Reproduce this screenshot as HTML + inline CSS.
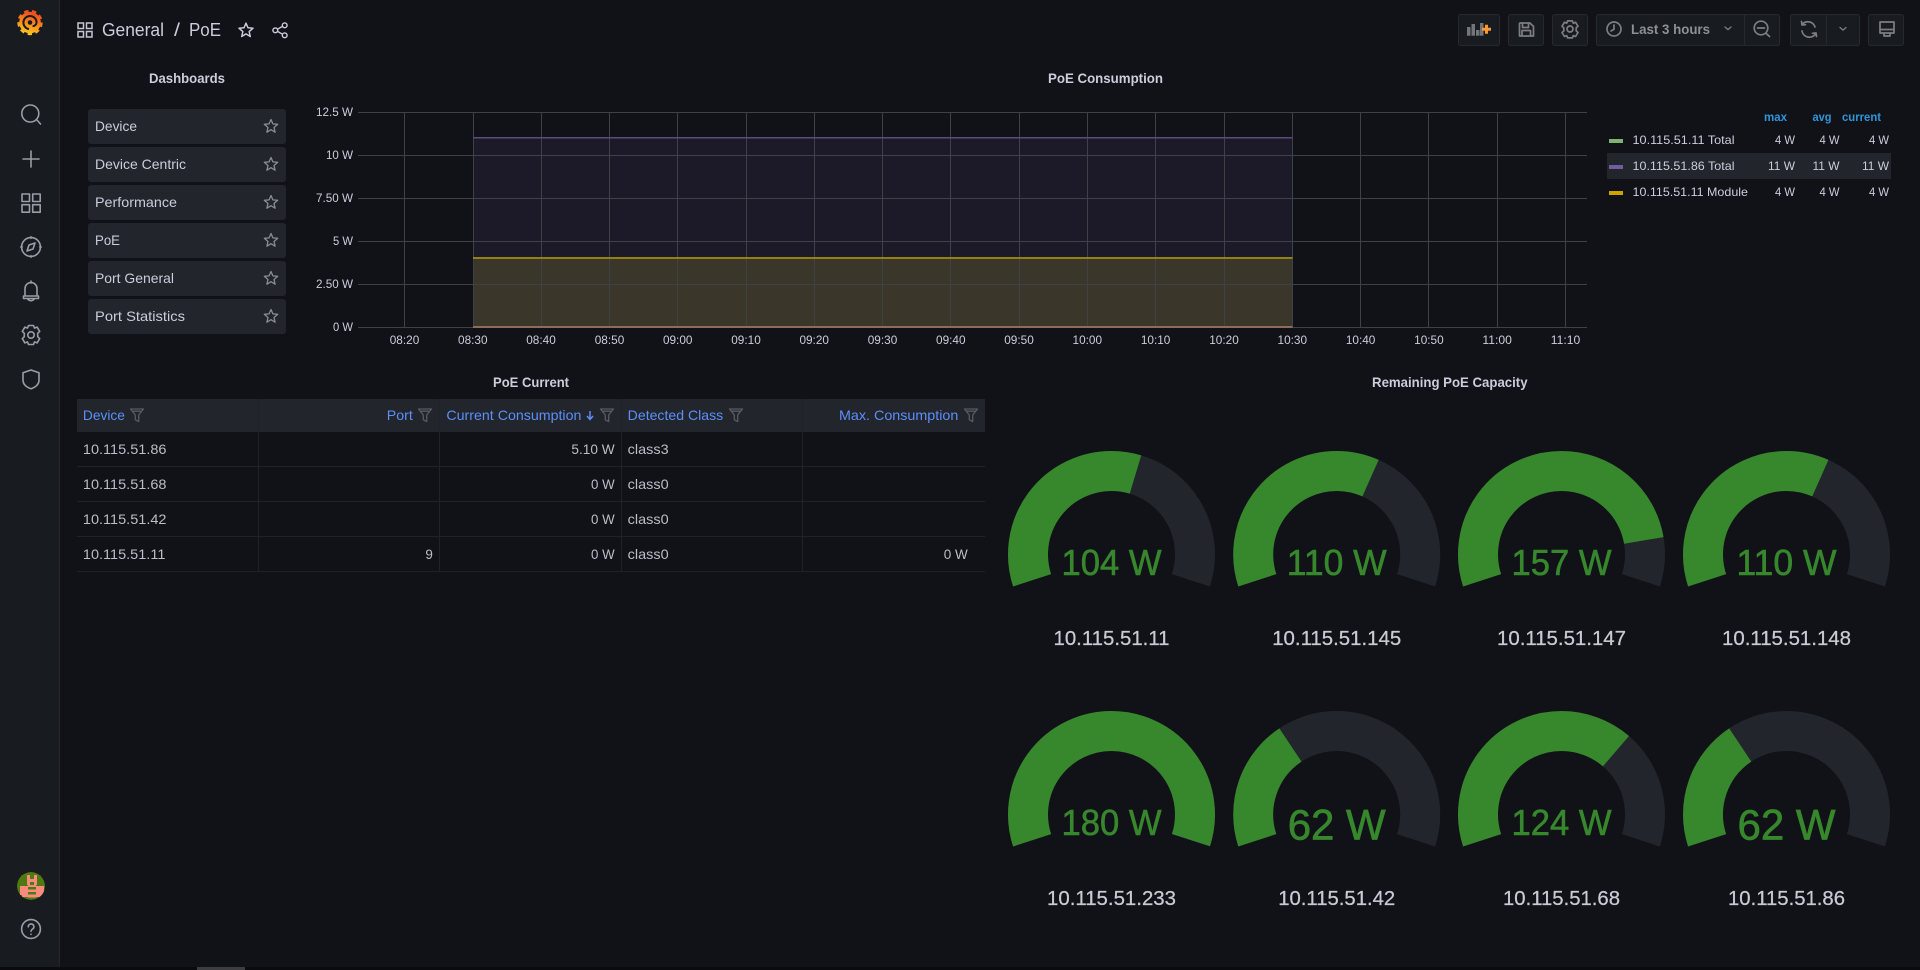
<!DOCTYPE html>
<html lang="en"><head><meta charset="utf-8"><title>PoE</title>
<style>
html,body{margin:0;padding:0;background:#111217;overflow:hidden}
svg{display:block}
text{font-family:"Liberation Sans",sans-serif;fill:#ccccdc}
.b{font-weight:700;font-size:14px}
.n{font-size:14px}
.s{font-size:12px}
.ax{font-size:12px;fill:#b9bac4}
.td{font-size:14px;fill:#bcbdc7}
.th{font-size:14px;fill:#5b8ff9}
.m{text-anchor:middle}
.e{text-anchor:end}
.ic{fill:none;stroke:#989da7;stroke-width:1.6;stroke-linecap:round;stroke-linejoin:round}
.tb{fill:none;stroke:#7d7e85;stroke-width:1.7;stroke-linecap:round;stroke-linejoin:round}
.btn{fill:#181b1f;stroke:#25282d}
.li{fill:#22252b}
.g{fill:none;stroke:#22252b;stroke-width:40}
.v{fill:none;stroke:#37872d;stroke-width:40}
.gv{font-size:36px;fill:#37872d;text-anchor:middle;stroke:#37872d;stroke-width:.6}
.gb{font-size:43px;fill:#37872d;text-anchor:middle;stroke:#37872d;stroke-width:.7}
.gl{font-size:20px;fill:#c9cad4;text-anchor:middle;stroke:#c9cad4;stroke-width:.25}
.gr line{stroke:#404146;stroke-width:1}
.col line{stroke:#202226;stroke-width:1}
</style></head><body>
<svg xmlns="http://www.w3.org/2000/svg" width="1920" height="970" viewBox="0 0 1920 970">
<defs>
<linearGradient id="lg" x1="0" y1="1" x2="0.3" y2="0"><stop offset="0" stop-color="#ffd21f"/><stop offset="0.55" stop-color="#fb8b1e"/><stop offset="1" stop-color="#f0501e"/></linearGradient>
<path id="star" d="M0-7 1.9-2.6 6.7-2.2 3 1 4.1 5.7 0 3.2-4.1 5.7-3 1-6.7-2.2-1.9-2.6Z" fill="none" stroke-linejoin="round"/>
<path id="fil" d="M0 0H13L8.2 6V12.5L4.8 10.8V6Z M1.5 2.2H11.5" fill="none" stroke="#595b62" stroke-width="1.3" stroke-linejoin="round"/>
<clipPath id="av"><circle cx="31" cy="886" r="14"/></clipPath>
</defs>

<rect width="1920" height="970" fill="#111217"/>
<!-- sidebar -->
<rect width="59" height="967" fill="#181b1f"/>
<rect x="59" width="1" height="967" fill="#23262b"/>
<!-- logo -->
<g transform="translate(30 22.5)">
<circle r="10.8" fill="url(#lg)"/>
<circle r="11.6" fill="none" stroke="url(#lg)" stroke-width="2.2" pathLength="90" stroke-dasharray="5.5 4.5"/>
<path d="M-1 6.6A6.6 6.6 0 1 1 6.6 0A4 4 0 0 1 2.6 3.6" fill="none" stroke="#181b1f" stroke-width="2"/>
<circle r="2.3" fill="#181b1f"/>
</g>
<!-- nav icons -->
<g class="ic">
<circle cx="30.3" cy="113.5" r="8.5"/><path d="M36.5 119.5 40.5 124"/>
<path d="M31 151V167M23 159H39"/>
<path d="M22 194h7.5v7.5H22zM32.7 194h7.5v7.5h-7.5zM22 204.7h7.5v7.5H22zM32.7 204.7h7.5v7.5h-7.5z"/>
<circle cx="31" cy="247" r="9.4"/><path d="M35 243 33 249 27 251 29 245Z"/><path d="M31 236.5v2M31 255.5v2M20.5 247h2M39.5 247h2" stroke-width="1.2"/>
<path d="M31 281v2M25 295v-6.5a6 6 0 0 1 12 0V295M23.5 296h15v2.5h-15zM28 299.5q3 2.5 6 0"/>
<circle cx="31" cy="335" r="3.2"/>
<path d="M28.5 325.5h5l1 2.6 2.6-1 2.6 4.3-2 1.9v3.4l2 1.9-2.6 4.3-2.6-1-1 2.6h-5l-1-2.6-2.6 1-2.6-4.3 2-1.9v-3.4l-2-1.9 2.6-4.3 2.6 1Z"/>
<path d="M31 370 39 372.8V380C39 384.8 35.4 387 31 388.8 26.6 387 23 384.8 23 380V372.8Z"/>
<circle cx="31" cy="929" r="9.4"/><path d="M28.3 926.8a2.8 2.8 0 1 1 4.3 2.3c-1 .7-1.6 1.1-1.6 2.2M31 934.2v.2"/>
</g>
<!-- avatar -->
<g clip-path="url(#av)">
<circle cx="31" cy="886" r="14" fill="#4f7a12"/>
<g fill="#f98a7e">
<rect x="27" y="875" width="3" height="10"/><rect x="34" y="875" width="3" height="10"/><rect x="27" y="879" width="10" height="3"/>
<rect x="20" y="886" width="8" height="9"/><rect x="36" y="886" width="8" height="9"/><rect x="22" y="895" width="6" height="2"/><rect x="36" y="895" width="6" height="2"/>
<rect x="28" y="885" width="8" height="2"/><rect x="28" y="889.5" width="8" height="2.5"/><rect x="28" y="894.5" width="8" height="3"/>
<rect x="20" y="874" width="2" height="2"/><rect x="40" y="874" width="2" height="2"/>
</g></g>
<!-- bottom strip -->
<rect y="967" width="1920" height="3" fill="#0a0b0d"/>
<rect x="197" y="967" width="48" height="3" fill="#3d3d3f"/>

<!-- breadcrumb -->
<path d="M78 23h5.5v5.5H78zM86.5 23H92v5.5h-5.5zM78 31.5h5.5V37H78zM86.5 31.5H92V37h-5.5z" fill="none" stroke="#c4c5cf" stroke-width="1.5"/>
<text x="102" y="36" font-size="18" textLength="62" lengthAdjust="spacingAndGlyphs">General</text>
<text x="174" y="36" font-size="18" textLength="6" lengthAdjust="spacingAndGlyphs">/</text>
<text x="189" y="36" font-size="18" textLength="32" lengthAdjust="spacingAndGlyphs">PoE</text>
<use href="#star" transform="translate(246 30.5) scale(1.05)" stroke="#ccccdc" stroke-width="1.4"/>
<g fill="none" stroke="#ccccdc" stroke-width="1.4"><circle cx="275.3" cy="30.3" r="2.4"/><circle cx="284.7" cy="25.3" r="2.4"/><circle cx="284.7" cy="35.3" r="2.4"/><path d="M277.5 29.2 282.5 26.4M277.5 31.4 282.5 34.2"/></g>

<!-- toolbar -->
<rect class="btn" x="1458.5" y="14.5" width="41" height="31" rx="2"/>
<rect class="btn" x="1508.5" y="14.5" width="35" height="31" rx="2"/>
<rect class="btn" x="1552.5" y="14.5" width="35" height="31" rx="2"/>
<rect class="btn" x="1596.5" y="14.5" width="183" height="31" rx="2"/>
<path d="M1744.5 14.5V45.5" stroke="#25282d"/>
<rect class="btn" x="1790.5" y="14.5" width="69" height="31" rx="2"/>
<path d="M1826.5 14.5V45.5" stroke="#25282d"/>
<rect class="btn" x="1868.5" y="14.5" width="35" height="31" rx="2"/>
<g fill="#74757b"><rect x="1467" y="27" width="3.5" height="8.7"/><rect x="1471.5" y="24" width="3.5" height="11.7"/><rect x="1476" y="30" width="3.5" height="5.7"/><rect x="1480" y="23" width="3.5" height="12.7"/></g>
<path d="M1482 29.2h9M1486.5 24.7v9" stroke="#ff9830" stroke-width="3" fill="none"/>
<g class="tb">
<path d="M1520 23h10l3.5 3.5V36h-14V23.5ZM1522.5 23v4.5h6V23M1522 36v-5.5h8.5V36"/>
<circle cx="1570" cy="29" r="3"/>
<path d="M1567.6 21.5h4.8l.9 2.3 2.3-.9 2.4 4-1.8 1.6v3l1.8 1.6-2.4 4-2.3-.9-.9 2.3h-4.8l-.9-2.3-2.3.9-2.4-4 1.8-1.6v-3l-1.8-1.6 2.4-4 2.3.9Z" transform="translate(0 -.6)"/>
<circle cx="1614" cy="29" r="7"/><path d="M1614 25v4.3l-3 1.7"/>
<path d="M1725 27l3 2.6 3-2.6" stroke-width="1.3"/>
<circle cx="1761" cy="28" r="6.8"/><path d="M1766 33.2 1769.5 36.5M1757.5 28h7"/>
<path d="M1802.5 24A7.5 7.5 0 0 1 1815 27M1815.5 34A7.5 7.5 0 0 1 1802 31M1801.5 21.5 1802 25 1805.5 24.7M1816.5 36.5 1816 33 1812.5 33.3"/>
<path d="M1840 27.5l3 2.6 3-2.6" stroke-width="1.3"/>
<path d="M1880 22h14v11h-14zM1880 29.5h14M1884 33v3h6v-3"/>
</g>
<text x="1631" y="34" class="n" font-weight="700" style="fill:#8e8f97" textLength="79" lengthAdjust="spacingAndGlyphs">Last 3 hours</text>

<!-- Dashboards panel -->
<text x="187" y="83" class="b m" textLength="76" lengthAdjust="spacingAndGlyphs">Dashboards</text>
<rect class="li" x="88" y="109" width="198" height="35" rx="3"/>
<rect class="li" x="88" y="147" width="198" height="35" rx="3"/>
<rect class="li" x="88" y="185" width="198" height="35" rx="3"/>
<rect class="li" x="88" y="223" width="198" height="35" rx="3"/>
<rect class="li" x="88" y="261" width="198" height="35" rx="3"/>
<rect class="li" x="88" y="299" width="198" height="35" rx="3"/>
<text x="95" y="131" class="n" textLength="42" lengthAdjust="spacingAndGlyphs">Device</text>
<text x="95" y="169" class="n" textLength="91" lengthAdjust="spacingAndGlyphs">Device Centric</text>
<text x="95" y="207" class="n" textLength="82" lengthAdjust="spacingAndGlyphs">Performance</text>
<text x="95" y="245" class="n" textLength="25" lengthAdjust="spacingAndGlyphs">PoE</text>
<text x="95" y="283" class="n" textLength="79" lengthAdjust="spacingAndGlyphs">Port General</text>
<text x="95" y="321" class="n" textLength="90" lengthAdjust="spacingAndGlyphs">Port Statistics</text>
<g stroke="#8a8c94" stroke-width="1.3">
<use href="#star" x="271" y="126.5"/><use href="#star" x="271" y="164.5"/><use href="#star" x="271" y="202.5"/><use href="#star" x="271" y="240.5"/><use href="#star" x="271" y="278.5"/><use href="#star" x="271" y="316.5"/>
</g>

<!-- Graph -->
<text x="1105.5" y="83" class="b m" textLength="115" lengthAdjust="spacingAndGlyphs">PoE Consumption</text>
<rect x="473" y="138" width="819.5" height="120" fill="#1c1a29"/>
<rect x="473" y="258" width="819.5" height="69.5" fill="#3a372a"/>
<g class="gr">
<line x1="358" x2="1587" y1="112.5" y2="112.5"/><line x1="358" x2="1587" y1="155.5" y2="155.5"/><line x1="358" x2="1587" y1="198.5" y2="198.5"/><line x1="358" x2="1587" y1="241.5" y2="241.5"/><line x1="358" x2="1587" y1="284.5" y2="284.5"/><line x1="358" x2="1587" y1="327.5" y2="327.5"/>
<line x1="404.5" x2="404.5" y1="112" y2="328"/><line x1="473.5" x2="473.5" y1="112" y2="328"/><line x1="541.5" x2="541.5" y1="112" y2="328"/><line x1="609.5" x2="609.5" y1="112" y2="328"/><line x1="677.5" x2="677.5" y1="112" y2="328"/><line x1="746.5" x2="746.5" y1="112" y2="328"/><line x1="814.5" x2="814.5" y1="112" y2="328"/><line x1="882.5" x2="882.5" y1="112" y2="328"/><line x1="950.5" x2="950.5" y1="112" y2="328"/><line x1="1019.5" x2="1019.5" y1="112" y2="328"/><line x1="1087.5" x2="1087.5" y1="112" y2="328"/><line x1="1155.5" x2="1155.5" y1="112" y2="328"/><line x1="1224.5" x2="1224.5" y1="112" y2="328"/><line x1="1292.5" x2="1292.5" y1="112" y2="328"/><line x1="1360.5" x2="1360.5" y1="112" y2="328"/><line x1="1428.5" x2="1428.5" y1="112" y2="328"/><line x1="1497.5" x2="1497.5" y1="112" y2="328"/><line x1="1565.5" x2="1565.5" y1="112" y2="328"/>
</g>
<rect x="473" y="137" width="819.5" height="1.5" fill="#5a4a80"/>
<rect x="473" y="257.2" width="819.5" height="1.5" fill="#b39f0c"/>
<rect x="473" y="326" width="819.5" height="2" fill="#8e6c58"/>
<g class="ax e">
<text x="353" y="116" textLength="37" lengthAdjust="spacingAndGlyphs">12.5 W</text>
<text x="353" y="159" textLength="27" lengthAdjust="spacingAndGlyphs">10 W</text>
<text x="353" y="202" textLength="37" lengthAdjust="spacingAndGlyphs">7.50 W</text>
<text x="353" y="245" textLength="20" lengthAdjust="spacingAndGlyphs">5 W</text>
<text x="353" y="288" textLength="37" lengthAdjust="spacingAndGlyphs">2.50 W</text>
<text x="353" y="331" textLength="20" lengthAdjust="spacingAndGlyphs">0 W</text>
</g>
<g class="ax m">
<text x="404.5" y="344" textLength="29.5" lengthAdjust="spacingAndGlyphs">08:20</text>
<text x="472.8" y="344" textLength="29.5" lengthAdjust="spacingAndGlyphs">08:30</text>
<text x="541" y="344" textLength="29.5" lengthAdjust="spacingAndGlyphs">08:40</text>
<text x="609.5" y="344" textLength="29.5" lengthAdjust="spacingAndGlyphs">08:50</text>
<text x="677.7" y="344" textLength="29.5" lengthAdjust="spacingAndGlyphs">09:00</text>
<text x="746" y="344" textLength="29.5" lengthAdjust="spacingAndGlyphs">09:10</text>
<text x="814.2" y="344" textLength="29.5" lengthAdjust="spacingAndGlyphs">09:20</text>
<text x="882.5" y="344" textLength="29.5" lengthAdjust="spacingAndGlyphs">09:30</text>
<text x="950.8" y="344" textLength="29.5" lengthAdjust="spacingAndGlyphs">09:40</text>
<text x="1019" y="344" textLength="29.5" lengthAdjust="spacingAndGlyphs">09:50</text>
<text x="1087.3" y="344" textLength="29.5" lengthAdjust="spacingAndGlyphs">10:00</text>
<text x="1155.6" y="344" textLength="29.5" lengthAdjust="spacingAndGlyphs">10:10</text>
<text x="1224" y="344" textLength="29.5" lengthAdjust="spacingAndGlyphs">10:20</text>
<text x="1292.3" y="344" textLength="29.5" lengthAdjust="spacingAndGlyphs">10:30</text>
<text x="1360.6" y="344" textLength="29.5" lengthAdjust="spacingAndGlyphs">10:40</text>
<text x="1428.9" y="344" textLength="29.5" lengthAdjust="spacingAndGlyphs">10:50</text>
<text x="1497.2" y="344" textLength="29.5" lengthAdjust="spacingAndGlyphs">11:00</text>
<text x="1565.5" y="344" textLength="29.5" lengthAdjust="spacingAndGlyphs">11:10</text>
</g>

<!-- legend -->
<g font-size="12" font-weight="700" style="fill:#33a2e5">
<text x="1764" y="121" style="fill:#2f95dc" textLength="23" lengthAdjust="spacingAndGlyphs">max</text>
<text x="1812.5" y="121" style="fill:#2f95dc" textLength="19" lengthAdjust="spacingAndGlyphs">avg</text>
<text x="1842" y="121" style="fill:#2f95dc" textLength="39" lengthAdjust="spacingAndGlyphs">current</text>
</g>
<rect x="1607" y="153" width="284" height="26" fill="#22252b"/>
<rect x="1609" y="139" width="14" height="4" fill="#7eb26d"/>
<rect x="1609" y="165" width="14" height="4" fill="#705da0"/>
<rect x="1609" y="191" width="14" height="4" fill="#cca300"/>
<g class="s">
<text x="1632.5" y="144" textLength="102" lengthAdjust="spacingAndGlyphs">10.115.51.11 Total</text>
<text x="1632.5" y="170" textLength="102" lengthAdjust="spacingAndGlyphs">10.115.51.86 Total</text>
<text x="1632.5" y="196" textLength="115.5" lengthAdjust="spacingAndGlyphs">10.115.51.11 Module</text>
</g>
<g class="s e">
<text x="1795" y="144" textLength="20" lengthAdjust="spacingAndGlyphs">4 W</text><text x="1839.5" y="144" textLength="20" lengthAdjust="spacingAndGlyphs">4 W</text><text x="1889" y="144" textLength="20" lengthAdjust="spacingAndGlyphs">4 W</text>
<text x="1795" y="170" textLength="27" lengthAdjust="spacingAndGlyphs">11 W</text><text x="1839.5" y="170" textLength="27" lengthAdjust="spacingAndGlyphs">11 W</text><text x="1889" y="170" textLength="27" lengthAdjust="spacingAndGlyphs">11 W</text>
<text x="1795" y="196" textLength="20" lengthAdjust="spacingAndGlyphs">4 W</text><text x="1839.5" y="196" textLength="20" lengthAdjust="spacingAndGlyphs">4 W</text><text x="1889" y="196" textLength="20" lengthAdjust="spacingAndGlyphs">4 W</text>
</g>

<!-- Table -->
<text x="531" y="387" class="b m" textLength="76" lengthAdjust="spacingAndGlyphs">PoE Current</text>
<rect x="77" y="399" width="908" height="33" fill="#22252b"/>
<g class="col">
<line x1="77" x2="985" y1="466.5" y2="466.5"/><line x1="77" x2="985" y1="501.5" y2="501.5"/><line x1="77" x2="985" y1="536.5" y2="536.5"/><line x1="77" x2="985" y1="571.5" y2="571.5"/>
<line x1="258.5" x2="258.5" y1="399" y2="571"/><line x1="439.5" x2="439.5" y1="399" y2="571"/><line x1="621.5" x2="621.5" y1="399" y2="571"/><line x1="802.5" x2="802.5" y1="399" y2="571"/>
</g>
<text x="82.9" y="420" class="th" textLength="42" lengthAdjust="spacingAndGlyphs">Device</text>
<text x="386.8" y="420" class="th" textLength="26" lengthAdjust="spacingAndGlyphs">Port</text>
<text x="446.4" y="420" class="th" textLength="135" lengthAdjust="spacingAndGlyphs">Current Consumption</text>
<text x="627.7" y="420" class="th" textLength="95.5" lengthAdjust="spacingAndGlyphs">Detected Class</text>
<text x="839" y="420" class="th" textLength="119.3" lengthAdjust="spacingAndGlyphs">Max. Consumption</text>
<path d="M590 411V419M587 416 590 419.5 593 416" fill="none" stroke="#5b8ff9" stroke-width="1.5"/>
<use href="#fil" x="130.5" y="409"/><use href="#fil" x="418.5" y="409"/><use href="#fil" x="600.5" y="409"/><use href="#fil" x="729.5" y="409"/><use href="#fil" x="964.5" y="409"/>
<text x="82.9" y="454" class="td" textLength="83.6" lengthAdjust="spacingAndGlyphs">10.115.51.86</text>
<text x="82.9" y="489" class="td" textLength="83.6" lengthAdjust="spacingAndGlyphs">10.115.51.68</text>
<text x="82.9" y="524" class="td" textLength="83.6" lengthAdjust="spacingAndGlyphs">10.115.51.42</text>
<text x="82.9" y="559" class="td" textLength="82.5" lengthAdjust="spacingAndGlyphs">10.115.51.11</text>
<text x="432.9" y="559" class="td e" textLength="7.5" lengthAdjust="spacingAndGlyphs">9</text>
<text x="614.6" y="454" class="td e" textLength="43.2" lengthAdjust="spacingAndGlyphs">5.10 W</text>
<text x="614.6" y="489" class="td e" textLength="23.6" lengthAdjust="spacingAndGlyphs">0 W</text>
<text x="614.6" y="524" class="td e" textLength="23.6" lengthAdjust="spacingAndGlyphs">0 W</text>
<text x="614.6" y="559" class="td e" textLength="23.6" lengthAdjust="spacingAndGlyphs">0 W</text>
<text x="627.7" y="454" class="td" textLength="41" lengthAdjust="spacingAndGlyphs">class3</text>
<text x="627.7" y="489" class="td" textLength="41" lengthAdjust="spacingAndGlyphs">class0</text>
<text x="627.7" y="524" class="td" textLength="41" lengthAdjust="spacingAndGlyphs">class0</text>
<text x="627.7" y="559" class="td" textLength="41" lengthAdjust="spacingAndGlyphs">class0</text>
<text x="967.7" y="559" class="td e" textLength="24" lengthAdjust="spacingAndGlyphs">0 W</text>

<!-- Gauges -->
<text x="1449.8" y="387" class="b m" textLength="155.5" lengthAdjust="spacingAndGlyphs">Remaining PoE Capacity</text>
<g transform="translate(1111.5 554.5)"><path class="g" d="M-79.41 25.8A83.5 83.5 0 1 1 79.41 25.8"/><path class="v" d="M-79.41 25.8A83.5 83.5 0 1 1 79.41 25.8" pathLength="216" stroke-dasharray="124.8 300"/><text y="20.5" class="gv" textLength="100" lengthAdjust="spacingAndGlyphs">104 W</text><text y="90.5" class="gl" textLength="116" lengthAdjust="spacingAndGlyphs">10.115.51.11</text></g>
<g transform="translate(1336.7 554.5)"><path class="g" d="M-79.41 25.8A83.5 83.5 0 1 1 79.41 25.8"/><path class="v" d="M-79.41 25.8A83.5 83.5 0 1 1 79.41 25.8" pathLength="216" stroke-dasharray="132 300"/><text y="20.5" class="gv" textLength="100" lengthAdjust="spacingAndGlyphs">110 W</text><text y="90.5" class="gl" textLength="129" lengthAdjust="spacingAndGlyphs">10.115.51.145</text></g>
<g transform="translate(1561.5 554.5)"><path class="g" d="M-79.41 25.8A83.5 83.5 0 1 1 79.41 25.8"/><path class="v" d="M-79.41 25.8A83.5 83.5 0 1 1 79.41 25.8" pathLength="216" stroke-dasharray="188.4 300"/><text y="20.5" class="gv" textLength="100" lengthAdjust="spacingAndGlyphs">157 W</text><text y="90.5" class="gl" textLength="129" lengthAdjust="spacingAndGlyphs">10.115.51.147</text></g>
<g transform="translate(1786.5 554.5)"><path class="g" d="M-79.41 25.8A83.5 83.5 0 1 1 79.41 25.8"/><path class="v" d="M-79.41 25.8A83.5 83.5 0 1 1 79.41 25.8" pathLength="216" stroke-dasharray="132 300"/><text y="20.5" class="gv" textLength="100" lengthAdjust="spacingAndGlyphs">110 W</text><text y="90.5" class="gl" textLength="129" lengthAdjust="spacingAndGlyphs">10.115.51.148</text></g>
<g transform="translate(1111.5 814.5)"><path class="g" d="M-79.41 25.8A83.5 83.5 0 1 1 79.41 25.8"/><path class="v" d="M-79.41 25.8A83.5 83.5 0 1 1 79.41 25.8" pathLength="216" stroke-dasharray="216 300"/><text y="20.5" class="gv" textLength="100" lengthAdjust="spacingAndGlyphs">180 W</text><text y="90.5" class="gl" textLength="129" lengthAdjust="spacingAndGlyphs">10.115.51.233</text></g>
<g transform="translate(1336.7 814.5)"><path class="g" d="M-79.41 25.8A83.5 83.5 0 1 1 79.41 25.8"/><path class="v" d="M-79.41 25.8A83.5 83.5 0 1 1 79.41 25.8" pathLength="216" stroke-dasharray="74.4 300"/><text y="24.8" class="gb" textLength="98" lengthAdjust="spacingAndGlyphs">62 W</text><text y="90.5" class="gl" textLength="117" lengthAdjust="spacingAndGlyphs">10.115.51.42</text></g>
<g transform="translate(1561.5 814.5)"><path class="g" d="M-79.41 25.8A83.5 83.5 0 1 1 79.41 25.8"/><path class="v" d="M-79.41 25.8A83.5 83.5 0 1 1 79.41 25.8" pathLength="216" stroke-dasharray="148.8 300"/><text y="20.5" class="gv" textLength="100" lengthAdjust="spacingAndGlyphs">124 W</text><text y="90.5" class="gl" textLength="117" lengthAdjust="spacingAndGlyphs">10.115.51.68</text></g>
<g transform="translate(1786.5 814.5)"><path class="g" d="M-79.41 25.8A83.5 83.5 0 1 1 79.41 25.8"/><path class="v" d="M-79.41 25.8A83.5 83.5 0 1 1 79.41 25.8" pathLength="216" stroke-dasharray="74.4 300"/><text y="24.8" class="gb" textLength="98" lengthAdjust="spacingAndGlyphs">62 W</text><text y="90.5" class="gl" textLength="117" lengthAdjust="spacingAndGlyphs">10.115.51.86</text></g>
</svg>
</body></html>
